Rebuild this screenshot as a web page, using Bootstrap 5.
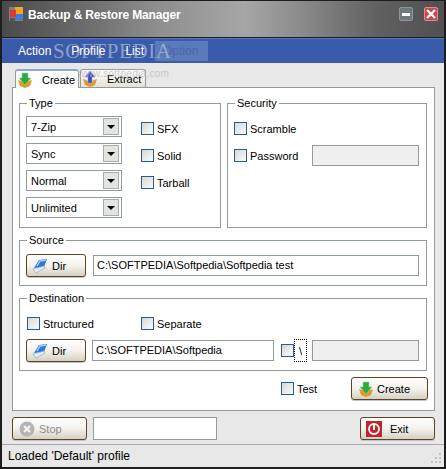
<!DOCTYPE html>
<html><head><meta charset="utf-8"><title>Backup & Restore Manager</title>
<link href="https://cdn.jsdelivr.net/npm/bootstrap@5.3.0/dist/css/bootstrap.min.css" rel="stylesheet">
<style>
html,body{margin:0;background:#1d1d1d}
.win{width:446px;height:469px;background:#e8e8e8;border:2px solid #1d1d1d;border-top-width:1px;font:12px/14px "Liberation Sans",sans-serif;color:#000;position:relative;overflow:hidden}
.tbar{height:37px;background:linear-gradient(90deg,#4a4a4a 0%,#6e6e6e 20%,#8e8e8e 35%,#a6a6a6 55%,#8a8a8a 68%,#606060 85%,#505050 100%);border-bottom:1px solid #1c1c1c;color:#fff;font-weight:700;letter-spacing:-.15px;padding:6px 6px 0 7px;gap:5px}
.tname{margin-top:1px}
.wbtn{width:14px;height:14px;border-radius:2px;background:#6e797b;border:1px solid #8d9799;margin-left:6px}
.wbtn.xb{background:#c8474d;border-color:#e8868a}
.mbar{height:25px;background:#3a5aaa;border-top:1px solid #5a78c0;color:#fff;padding-left:16px;position:relative;gap:20px}
.mitem{position:relative;z-index:1}
.mopt{position:absolute;left:153px;top:2px;width:53px;height:20px;background:#5a7abc;color:#4c66a8;padding:3px 0 0 8px}
.wm1{position:absolute;left:51px;top:0;font:21px/24px "Liberation Serif",serif;letter-spacing:.6px;color:#c4cde0;opacity:.6;white-space:nowrap;z-index:1}
.wm2{position:absolute;left:76px;top:67px;font-size:10px;line-height:12px;color:#bdbdbd;opacity:.75;z-index:2;letter-spacing:.3px}
.tabrow{height:24px;padding:6px 0 0 13px;gap:1px;align-items:flex-start;font-size:11px}
.tabi{height:18px;width:66px;border:1px solid #919b9c;border-bottom:0;border-radius:3px 3px 0 0;background:linear-gradient(#fdfdfd,#e4e2d8);gap:9px;padding:0 0 0 1px;white-space:nowrap}
.tabi.on{height:19px;width:64px;background:#fdfdfd;border-top:2px solid #8fa6cf;position:relative;z-index:1}
.page{margin-left:10px;width:423px;height:324px;background:#fff;border:1px solid #919b9c;padding:8px 7px 0 6px;font-size:11px}
.gbox{border:1px solid #919b9c;margin:0;padding:0 7px 0 6px;min-width:0}
.gbox legend{float:none;width:auto;font-size:11px;line-height:14px;margin:0 0 0 1px;padding:0 2px;background:#fff}
.gtype{width:202px;height:132px}
.gsec{width:200px;height:132px;margin-left:6px}
.gsrc{height:53px;margin-top:5px}
.gdst{height:80px;margin-top:5px}
.selcol{padding-top:6px}
.sel{width:96px;height:21px;border:1px solid #919b9c;background:#fff;padding:0 2px 0 4px;margin-bottom:6px}
.sarr{width:16px;height:17px;background:#e4e4e0;border:1px solid #a4acac;display:flex;align-items:center;justify-content:center}
.sarr i{display:block;border-left:4px solid transparent;border-right:4px solid transparent;border-top:4px solid #000}
.chkcol{margin-left:19px;padding-top:12px;gap:14px}
.chk{width:13px;height:13px;flex:none;border:1px solid #2b5a8c;background:linear-gradient(135deg,#d8d8d3,#fbfbfb)}
.cl{gap:3px;height:13px;white-space:nowrap}
.tin{height:21px;border:1px solid #919b9c;background:#fff;padding:0 3px;white-space:nowrap;overflow:hidden;line-height:18px}
.tin.dis{background:#efefef;width:107px}
.scr{margin-top:12px}
.pwd{margin-top:10px}
.xbtn{height:23px;width:60px;padding:0 0 0 5px;gap:3px;border:1px solid #5c4426;border-radius:3px;background:linear-gradient(#fff 0%,#f3f2ec 50%,#d4d1c6 100%);font-size:11px;line-height:14px;color:#000;white-space:nowrap;box-shadow:0 1px 0 #c4c4c4;--bs-btn-border-width:1px}
.srcrow{padding-top:7px}
.srcrow .tin{margin-left:7px}
.opts{margin:12px 0 0 1px}
.optw{width:114px}
.dstrow{margin-top:9px}
.dpath{width:182px;margin-left:6px}
.dchk{margin-left:7px}
.bslash{width:13px;height:23px;border:1px dotted #000;display:flex;justify-content:center;align-items:center}
.dext{margin-left:5px}
.runrow{margin:6px -1px 0 0}
.tcl{width:70px}
.crb{width:77px;height:23px;padding-left:6px}
.botrow{height:33px;padding:6px 9px 0 10px}
.stopb{width:75px;padding-left:6px;gap:4px;color:#8c8c8c}
.stopb:disabled{color:#8c8c8c;opacity:1;border-color:#5c4426}
.stat{width:124px;height:23px;margin-left:6px}
.exb{width:75px;padding-left:5px;gap:8px}
.sbar{height:23px;border-top:1px solid #a8a8a8;padding-left:6px;line-height:22px;position:relative}
.grip{position:absolute;right:2px;bottom:3px}
</style></head><body>
<div class="win">
 <div class="tbar d-flex align-items-start">
  <svg width="14" height="14" viewBox="0 0 14 14"><rect width="14" height="14" fill="#808080"/><rect x="6" y="0" width="8" height="7" fill="#f2a81e"/><rect x="6" y="7" width="8" height="6" fill="#3d7fe0"/><rect x="1" y="3" width="6" height="7" fill="#d93a30"/><path d="M1 11h5v3H1z" fill="#555"/></svg>
  <span class="tname flex-grow-1">Backup &amp; Restore Manager</span>
  <span class="wbtn d-flex align-items-center justify-content-center"><svg width="8" height="3"><rect width="8" height="3" fill="#fff"/></svg></span>
  <span class="wbtn xb d-flex align-items-center justify-content-center"><svg width="10" height="10" viewBox="0 0 10 10"><path d="M1 1l8 8M9 1l-8 8" stroke="#fff" stroke-width="2.4"/></svg></span>
 </div>
 <div class="mbar d-flex align-items-center">
  <span class="wm1">SOFTPEDIA</span>
  <span class="mitem">Action</span><span class="mitem">Profile</span><span class="mitem">List</span>
  <span class="mopt">Option</span>
 </div>
 <span class="wm2">www.softpedia.com</span>
 <div class="tabrow d-flex">
  <div class="tabi on d-flex align-items-center"><svg width="16" height="16" viewBox="0 0 16 16"><path d="M1 8l3 1 4 2 4-2 3-1-2 6-5 2-5-2z" fill="#e39a28"/><path d="M5 1h6v5h3l-6 7-6-7h3z" fill="#2fa83f" stroke="#8fd890" stroke-width=".6"/></svg><span>Create</span></div>
  <div class="tabi d-flex align-items-center"><svg width="16" height="16" viewBox="0 0 16 16"><path d="M1 8l3 1 4 2 4-2 3-1-2 6-5 2-5-2z" fill="#e39a28"/><path d="M8 0l5 6h-3v6H6V6H3z" fill="#3848c4" stroke="#9aa4e8" stroke-width=".6"/></svg><span>Extract</span></div>
 </div>
 <div class="page">
  <div class="d-flex">
   <fieldset class="gbox gtype"><legend>Type</legend>
    <div class="d-flex">
     <div class="selcol">
      <div class="sel d-flex align-items-center justify-content-between"><span>7-Zip</span><span class="sarr"><i></i></span></div>
      <div class="sel d-flex align-items-center justify-content-between"><span>Sync</span><span class="sarr"><i></i></span></div>
      <div class="sel d-flex align-items-center justify-content-between"><span>Normal</span><span class="sarr"><i></i></span></div>
      <div class="sel d-flex align-items-center justify-content-between"><span>Unlimited</span><span class="sarr"><i></i></span></div>
     </div>
     <div class="chkcol d-flex flex-column">
      <div class="cl d-flex align-items-center"><span class="chk"></span>SFX</div>
      <div class="cl d-flex align-items-center"><span class="chk"></span>Solid</div>
      <div class="cl d-flex align-items-center"><span class="chk"></span>Tarball</div>
     </div>
    </div>
   </fieldset>
   <fieldset class="gbox gsec"><legend>Security</legend>
    <div class="cl scr d-flex align-items-center"><span class="chk"></span>Scramble</div>
    <div class="pwd d-flex align-items-center justify-content-between">
      <div class="cl d-flex align-items-center"><span class="chk"></span>Password</div>
      <div class="tin dis"></div>
    </div>
   </fieldset>
  </div>
  <fieldset class="gbox gsrc"><legend>Source</legend>
   <div class="srcrow d-flex align-items-center">
    <button class="btn xbtn d-flex align-items-center"><svg width="17" height="16" viewBox="0 0 17 16"><path d="M2 10L7 2l8-1-3 8z" fill="#2f78e0"/><path d="M5 8l3-5 6-1" fill="none" stroke="#a9cdf8" stroke-width="1.4"/><path d="M1 11l11-3 1 2-9 5z" fill="#e6edf6" stroke="#7f9cc4" stroke-width=".6"/></svg><span>Dir</span></button>
    <div class="tin flex-grow-1">C:\SOFTPEDIA\Softpedia\Softpedia test</div>
   </div>
  </fieldset>
  <fieldset class="gbox gdst"><legend>Destination</legend>
   <div class="opts d-flex"><div class="cl optw d-flex align-items-center"><span class="chk"></span>Structured</div><div class="cl d-flex align-items-center"><span class="chk"></span>Separate</div></div>
   <div class="dstrow d-flex align-items-center">
    <button class="btn xbtn d-flex align-items-center"><svg width="17" height="16" viewBox="0 0 17 16"><path d="M2 10L7 2l8-1-3 8z" fill="#2f78e0"/><path d="M5 8l3-5 6-1" fill="none" stroke="#a9cdf8" stroke-width="1.4"/><path d="M1 11l11-3 1 2-9 5z" fill="#e6edf6" stroke="#7f9cc4" stroke-width=".6"/></svg><span>Dir</span></button>
    <div class="tin dpath">C:\SOFTPEDIA\Softpedia</div>
    <span class="chk dchk"></span><span class="bslash">\</span>
    <div class="tin dis dext"></div>
   </div>
  </fieldset>
  <div class="runrow d-flex justify-content-end align-items-center">
   <div class="cl tcl d-flex align-items-center"><span class="chk"></span>Test</div>
   <button class="btn xbtn crb d-flex align-items-center"><svg width="16" height="16" viewBox="0 0 16 16"><path d="M1 8l3 1 4 2 4-2 3-1-2 6-5 2-5-2z" fill="#e39a28"/><path d="M5 1h6v5h3l-6 7-6-7h3z" fill="#2fa83f" stroke="#8fd890" stroke-width=".6"/></svg><span>Create</span></button>
  </div>
 </div>
 <div class="botrow d-flex align-items-start">
  <button class="btn xbtn stopb d-flex align-items-center" disabled><svg width="16" height="16" viewBox="0 0 16 16"><circle cx="8" cy="8" r="7.5" fill="#b4b4b4"/><path d="M5 5l6 6M11 5l-6 6" stroke="#f4f4f4" stroke-width="2.2"/></svg><span>Stop</span></button>
  <div class="tin stat"></div>
  <button class="btn xbtn exb ms-auto d-flex align-items-center"><svg width="16" height="16" viewBox="0 0 16 16"><rect width="16" height="16" fill="#c4222c"/><circle cx="8" cy="8" r="5" fill="none" stroke="#fff" stroke-width="1.8"/><rect x="7" y="3" width="2" height="6" fill="#fff"/></svg><span>Exit</span></button>
 </div>
 <div class="sbar">Loaded 'Default' profile
  <svg class="grip" width="12" height="11" viewBox="0 0 12 11"><g fill="#c0c0c0"><rect x="9" y="0" width="2" height="2"/><rect x="5" y="4" width="2" height="2"/><rect x="9" y="4" width="2" height="2"/><rect x="1" y="8" width="2" height="2"/><rect x="5" y="8" width="2" height="2"/><rect x="9" y="8" width="2" height="2"/></g></svg>
 </div>
</div>
</body></html>
